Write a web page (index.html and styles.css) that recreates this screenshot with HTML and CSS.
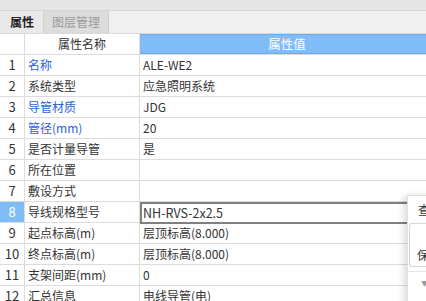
FILE: index.html
```html
<!DOCTYPE html>
<html lang="zh">
<head>
<meta charset="utf-8">
<link rel="stylesheet" href="styles.css">
</head>
<body>
<div class="topbar"></div>
<div class="tabs">
  <div class="tab active">属性</div>
  <div class="tab">图层管理</div>
</div>
<div class="grid">
  <div class="row head">
    <div class="c num"></div>
    <div class="c name center">属性名称</div>
    <div class="c val hval">属性值</div>
  </div>
  <div class="row"><div class="c num">1</div><div class="c name blue">名称</div><div class="c val">ALE-WE2</div></div>
  <div class="row"><div class="c num">2</div><div class="c name">系统类型</div><div class="c val">应急照明系统</div></div>
  <div class="row"><div class="c num">3</div><div class="c name blue">导管材质</div><div class="c val">JDG</div></div>
  <div class="row"><div class="c num">4</div><div class="c name blue">管径(mm)</div><div class="c val">20</div></div>
  <div class="row"><div class="c num">5</div><div class="c name">是否计量导管</div><div class="c val">是</div></div>
  <div class="row"><div class="c num">6</div><div class="c name">所在位置</div><div class="c val"></div></div>
  <div class="row"><div class="c num">7</div><div class="c name">敷设方式</div><div class="c val"></div></div>
  <div class="row"><div class="c num sel">8</div><div class="c name">导线规格型号</div><div class="c val edit">NH-RVS-2x2.5</div></div>
  <div class="row"><div class="c num">9</div><div class="c name">起点标高(m)</div><div class="c val">层顶标高(8.000)</div></div>
  <div class="row"><div class="c num">10</div><div class="c name">终点标高(m)</div><div class="c val">层顶标高(8.000)</div></div>
  <div class="row"><div class="c num">11</div><div class="c name">支架间距(mm)</div><div class="c val">0</div></div>
  <div class="row"><div class="c num">12</div><div class="c name">汇总信息</div><div class="c val">电线导管(电)</div></div>
</div>
<div class="popup">
  <div class="pitem">查</div>
  <div class="pbox"><span>保</span></div>
  <div class="pdrop">▼</div>
</div>
</body>
</html>
```
FILE: styles.css
```css
html, body {
  margin: 0;
  padding: 0;
  width: 426px;
  height: 301px;
  overflow: hidden;
  background: #ffffff;
  font-family: "Noto Sans CJK SC", "Noto Sans", sans-serif;
  font-size: 12px;
  color: #333333;
  position: relative;
}
.topbar {
  height: 10px;
  background: #e6e6e6;
  border-bottom: 1px solid #d4d4d4;
}
.tabs {
  height: 22px;
  background: #f0f0f0;
  border-bottom: 1px solid #dadada;
  display: flex;
}
.tab {
  height: 22px;
  line-height: 22px;
  padding: 0 8px;
  background: #dcdcdc;
  color: #9a9a9a;
  border-right: 1px solid #cfcfcf;
  font-size: 12px;
  white-space: nowrap;
}
.tab.active {
  background: #e9e9e9;
  color: #222222;
  font-weight: bold;
  padding: 0 9px 0 10px;
}
.grid {
  width: 434px;
}
.row {
  display: grid;
  grid-template-columns: 25px 115px 1fr;
  height: 20px;
  border-bottom: 1px solid #dcdcdc;
}
.c {
  height: 20px;
  line-height: 20px;
  border-right: 1px solid #dcdcdc;
  white-space: nowrap;
  overflow: hidden;
}
.num {
  text-align: center;
  font-size: 13px;
}
.name {
  padding-left: 3px;
}
.val {
  padding-left: 3px;
  border-right: none;
}
.center {
  text-align: center;
  padding-left: 0;
}
.hval {
  background: #80bcf8;
  color: #ffffff;
  text-align: center;
  padding-left: 0;
  border-top: 1px solid #6daef2;
  border-bottom: 1px solid #6aaaf0;
  height: 18px;
  line-height: 18px;
  margin-bottom: -1px;
  position: relative;
  font-size: 12.5px;
}
.blue {
  color: #2c63d6;
}
.sel {
  background: #80bcf8;
  color: #ffffff;
}
.edit {
  border: 2px solid #808080;
  height: 18px;
  line-height: 18px;
  padding-left: 1px;
  margin-bottom: -1px;
  position: relative;
  z-index: 1;
  font-size: 12.5px;
}
.popup {
  position: absolute;
  left: 407px;
  top: 195px;
  width: 40px;
  height: 120px;
  background: #ffffff;
  border-left: 1px solid #e0e0e0;
  border-top: 1px solid #e0e0e0;
  box-shadow: -4px 0 6px rgba(0, 0, 0, 0.12);
  z-index: 5;
}
.pitem {
  height: 27px;
  line-height: 27px;
  padding-left: 10px;
  font-size: 12px;
  color: #333333;
}
.pbox {
  margin-left: 1px;
  height: 42px;
  border: 1px solid #d6d6d6;
  border-right: none;
  border-radius: 3px 0 0 3px;
  display: flex;
  align-items: flex-end;
  padding-left: 7px;
  font-size: 12px;
  color: #333333;
  line-height: 22px;
}
.pdrop {
  margin-top: 4px;
  border-top: 1px solid #e6e6e6;
  padding-left: 13px;
  font-size: 7px;
  line-height: 22px;
  color: #999999;
}
```
